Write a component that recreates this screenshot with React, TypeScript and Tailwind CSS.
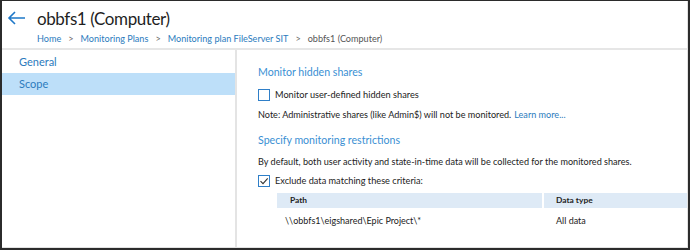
import React from "react";

const font = { fontFamily: 'Lato, "Noto Sans", sans-serif' };

function Checkbox({ checked }: { checked?: boolean }) {
  return (
    <div className="w-[12px] h-[12px] border border-[#2f7fc8] bg-white flex items-center justify-center shrink-0">
      {checked && (
        <svg width="10" height="10" viewBox="0 0 10 10">
          <path d="M1.5 5.2 L4 7.6 L8.7 2.4" fill="none" stroke="#333" strokeWidth="1.1" />
        </svg>
      )}
    </div>
  );
}

export default function App() {
  return (
    <div style={font} className="w-[690px] h-[250px] bg-[#2b2b2b] pt-[1px] pl-[2px] pr-[2px] pb-[2px]">
      <div className="w-full h-full bg-white border-r border-b border-[#e2e2e2] flex flex-col overflow-hidden">
        {/* Header */}
        <div className="h-[47px] shrink-0">
          <div className="flex items-center h-[30px] pt-[4px]">
            <svg width="20" height="16" viewBox="0 0 20 16" className="ml-[5px]">
              <path d="M2 8 H18 M8 2 L2 8 L8 14" fill="none" stroke="#1e78c8" strokeWidth="1.6" />
            </svg>
            <div className="ml-[10px] text-[17px] leading-none text-[#1f1f1f] tracking-[-0.4px]">obbfs1 (Computer)</div>
          </div>
          <div className="flex items-center ml-[35px] mt-[1px] text-[9.1px] leading-none h-[14px]">
            <span className="text-[#2b7bbd]">Home</span>
            <span className="text-[#666] mx-[7px]">&gt;</span>
            <span className="text-[#2b7bbd]">Monitoring Plans</span>
            <span className="text-[#666] mx-[7px]">&gt;</span>
            <span className="text-[#2b7bbd]">Monitoring plan FileServer SIT</span>
            <span className="text-[#666] mx-[7px]">&gt;</span>
            <span className="text-[#555]">obbfs1 (Computer)</span>
          </div>
        </div>
        <div className="h-[2px] bg-[#e6e6e6] shrink-0" />
        {/* Body */}
        <div className="flex flex-1">
          <div className="w-[235px] shrink-0 border-r-2 border-[#e4e4e4] pt-[2px]">
            <div className="h-[21px] flex items-center pl-[17px] text-[11px] text-[#2b7bbd]">General</div>
            <div className="h-[22px] flex items-center pl-[17px] text-[11px] text-[#2b7bbd] bg-[#bddff9]">Scope</div>
          </div>
          <div className="flex-1 pl-[21px] pt-[15px] text-[9.1px] text-[#222]">
            <div className="h-[16px] flex items-center text-[10.6px] text-[#3a8fd3]">Monitor hidden shares</div>
            <div className="h-[22px] mt-[3px] flex items-center gap-[5px]">
              <Checkbox />
              <span className="text-[9.2px]">Monitor user-defined hidden shares</span>
            </div>
            <div className="h-[16px] mt-[1px] flex items-center">
              <span>Note: Administrative shares (like Admin$) will not be monitored.</span>
              <span className="ml-[3px] text-[#2b7bbd]">Learn more...</span>
            </div>
            <div className="h-[18px] mt-[9px] flex items-center text-[10.6px] text-[#3a8fd3]">Specify monitoring restrictions</div>
            <div className="h-[16px] mt-[4px] flex items-center">
              By default, both user activity and state-in-time data will be collected for the monitored shares.
            </div>
            <div className="h-[18px] mt-[2px] flex items-center gap-[5px]">
              <Checkbox checked />
              <span className="text-[9.2px]">Exclude data matching these criteria:</span>
            </div>
            <div className="ml-[19px] mt-[3px]">
              <div className="flex h-[15px] gap-[2px] text-[8.4px] font-bold text-[#222]">
                <div className="w-[265px] bg-[#deeaf6] flex items-center pl-[13px]">Path</div>
                <div className="flex-1 bg-[#deeaf6] flex items-center pl-[12px]">Data type</div>
              </div>
              <div className="flex h-[26px] gap-[2px] text-[9px]">
                <div className="w-[265px] flex items-center pl-[8px]">\\obbfs1\eigshared\Epic Project\*</div>
                <div className="flex-1 flex items-center pl-[12px]">All data</div>
              </div>
            </div>
          </div>
        </div>
      </div>
    </div>
  );
}
